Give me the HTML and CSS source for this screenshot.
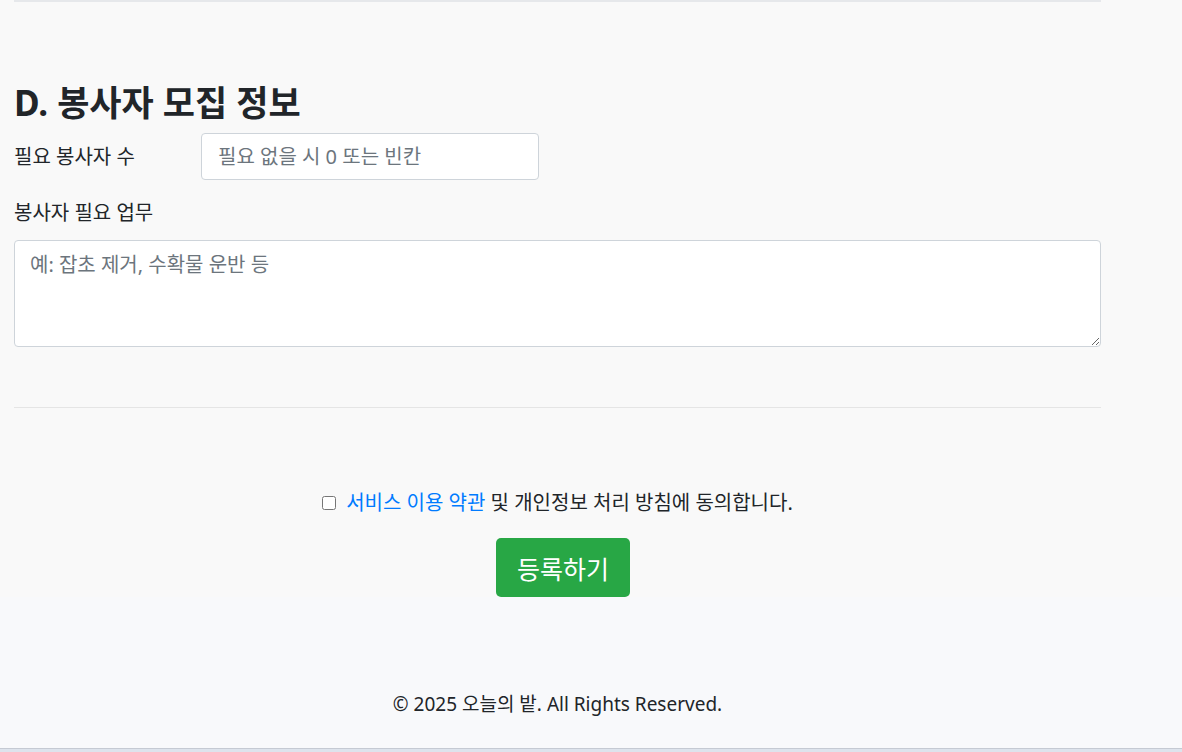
FILE: index.html
```html
<!DOCTYPE html>
<html lang="ko">
<head>
<meta charset="utf-8">
<title>봉사자 모집 정보</title>
<link rel="stylesheet" href="styles.css">
</head>
<body>
<main class="page">
  <hr class="rule rule-top">
  <section class="section">
    <h2 class="title">D. 봉사자 모집 정보</h2>
    <div class="row-field">
      <label class="field-label" for="count">필요 봉사자 수</label>
      <input class="input" id="count" type="text" placeholder="필요 없을 시 0 또는 빈칸">
    </div>
    <div class="stack-field">
      <label class="field-label" for="tasks">봉사자 필요 업무</label>
      <textarea class="textarea" id="tasks" placeholder="예: 잡초 제거, 수확물 운반 등"></textarea>
    </div>
  </section>
  <hr class="rule rule-mid">
  <div class="agree">
    <input class="check" type="checkbox" id="agree">
    <label for="agree"><a class="link" href="#">서비스 이용 약관</a> 및 개인정보 처리 방침에 동의합니다.</label>
  </div>
  <div class="submit-wrap">
    <button class="btn-submit" type="button">등록하기</button>
  </div>
</main>
<footer class="footer">
  <div class="footer-inner">© 2025 오늘의 밭. All Rights Reserved.</div>
</footer>
<div class="chrome-bottom"></div>
</body>
</html>
```

FILE: styles.css
```css
html, body {
  margin: 0;
  padding: 0;
  height: 752px;
  overflow: hidden;
}
body {
  background: #f9f9f9;
  color: #212529;
  font-family: "Noto Sans", "Noto Sans CJK KR", sans-serif;
  font-size: 20px;
  line-height: 30px;
}
.page {
  width: 1087px;
  margin-left: 14px;
}
.rule {
  border: 0;
  margin: 0;
  height: 1px;
}
.rule-top {
  background: #e6e8eb;
  height: 2px;
}
.rule-mid {
  background: #e5e5e5;
  margin-top: 60px;
}
.section {
  display: flex;
  flex-direction: column;
}
.title {
  margin: 81px 0 10px;
  font-family: "Noto Sans", "Noto Sans CJK KR", sans-serif;
  font-size: 35px;
  line-height: 40px;
  font-weight: 700;
  color: #212529;
}
.row-field {
  display: flex;
  align-items: center;
}
.row-field .field-label {
  width: 187px;
}
.field-label {
  font-size: 20px;
  line-height: 30px;
}
.input {
  box-sizing: border-box;
  width: 338px;
  height: 47px;
  padding: 0 16px;
  border: 1px solid #ced4da;
  border-radius: 4px;
  background: #fff;
  font-family: inherit;
  font-size: 20px;
  color: #495057;
}
.input::placeholder,
.textarea::placeholder {
  color: #6c757d;
}
.stack-field {
  display: flex;
  flex-direction: column;
  margin-top: 18px;
}
.stack-field .field-label {
  margin-bottom: 12px;
}
.textarea {
  box-sizing: border-box;
  width: 1087px;
  height: 107px;
  padding: 9px 15px;
  border: 1px solid #ced4da;
  border-radius: 4px;
  background: #fff;
  font-family: inherit;
  font-size: 20px;
  line-height: 30px;
  color: #495057;
  resize: vertical;
}
.agree {
  margin-top: 80px;
  display: flex;
  justify-content: center;
  align-items: center;
  gap: 10px;
}
.check {
  width: 14px;
  height: 14px;
  margin: 0;
}
.link {
  color: #007bff;
  text-decoration: none;
}
.submit-wrap {
  display: flex;
  justify-content: center;
  margin-top: 20px;
  padding-left: 11px;
}
.btn-submit {
  height: 59px;
  padding: 0 21px;
  border: 0;
  border-radius: 5px;
  background: #28a745;
  color: #fff;
  font-family: inherit;
  font-size: 25px;
  cursor: pointer;
}
.footer {
  background: #f8f9fb;
  height: 151px;
}
.footer-inner {
  width: 1087px;
  margin-left: 14px;
  padding-top: 93px;
  text-align: center;
  font-size: 19px;
  line-height: 28px;
}
.chrome-bottom {
  height: 3px;
  background: #dde3ec;
  border-top: 1px solid #c5cad3;
}
```
